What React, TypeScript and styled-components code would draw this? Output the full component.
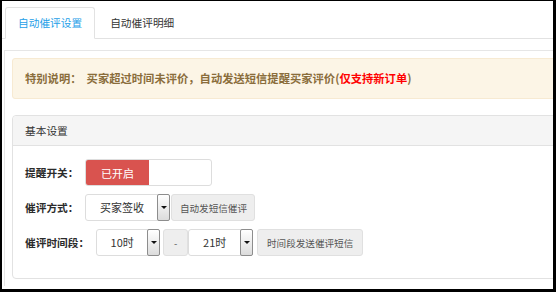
import styled, { createGlobalStyle } from "styled-components";

const GlobalStyle = createGlobalStyle`
  html, body {
    margin: 0;
    padding: 0;
    background: #fff;
  }
  body {
    font-family: "Noto Sans CJK SC", "Liberation Sans", sans-serif;
    font-size: 10.7px;
    color: #333;
  }
`;

const Frame = styled.div`
  width: 556px;
  height: 292px;
  box-sizing: border-box;
  border-style: solid;
  border-color: #000;
  border-width: 1px 3px 3px 2px;
  overflow: hidden;
  background: #fff;
`;
const Page = styled.div`
  width: 640px;
`;
const TabBar = styled.div`
  display: flex;
  padding: 6px 0 0 3px;
  border-bottom: 1px solid #e2e2e2;
`;
const Tab = styled.div<{ $active?: boolean }>`
  height: 30px;
  line-height: 30px;
  padding: 0 12px;
  margin-bottom: -1px;
  border: 1px solid transparent;
  border-radius: 3px 3px 0 0;
  color: #333;
  ${(p) =>
    p.$active &&
    `
    border-color: #e2e2e2;
    border-bottom-color: #fff;
    background: #fff;
    color: #26a0e8;
  `}
  & + & {
    padding-left: 14px;
  }
`;
const Content = styled.div`
  margin: 11px 0 0 2px;
  border-top: 1px solid #e6e6e6;
  border-left: 1px solid #e6e6e6;
  padding: 7px;
`;
const Notice = styled.div`
  height: 39px;
  line-height: 39px;
  padding-left: 12px;
  border: 1px solid #f7ead2;
  border-radius: 3px;
  background: #fcf5e6;
  color: #8a6d3b;
  font-size: 11.3px;
  font-weight: bold;
  white-space: pre;
`;
const Red = styled.span`
  color: #f00;
`;
const Panel = styled.div`
  margin-top: 16px;
  border: 1px solid #e2e2e2;
  border-radius: 4px;
`;
const PanelHeader = styled.div`
  height: 29px;
  line-height: 29px;
  padding-left: 12px;
  background: #f5f5f5;
  border-bottom: 1px solid #e2e2e2;
  border-radius: 4px 4px 0 0;
`;
const PanelBody = styled.div`
  display: flex;
  flex-direction: column;
  gap: 8px;
  padding: 13px 12px 22px;
`;
const Row = styled.div`
  display: flex;
  align-items: center;
  height: 27px;
`;
const Label = styled.span`
  font-weight: bold;
  margin-right: 7px;
  color: #2b2b2b;
`;
const Switch = styled.div`
  display: flex;
  width: 127px;
  height: 27px;
  box-sizing: border-box;
  border: 1px solid #ddd;
  border-radius: 3px;
  overflow: hidden;
  background: #fff;
`;
const SwitchOn = styled.span`
  width: 64px;
  margin: -1px 0 -1px -1px;
  background: #d9534f;
  color: #fff;
  font-size: 11px;
  display: flex;
  align-items: center;
  justify-content: center;
`;
const Select = styled.div<{ $w: number }>`
  display: flex;
  width: ${(p) => p.$w}px;
  height: 27px;
  box-sizing: border-box;
  border: 1px solid #ddd;
  border-radius: 3px;
  background: #fff;
`;
const SelectText = styled.span`
  flex: 1;
  line-height: 25px;
  text-align: center;
  font-size: 11px;
  color: #333;
`;
const Caret = styled.span`
  width: 13px;
  box-sizing: border-box;
  margin: -1px -1px -1px 0;
  border: 1px solid #8d8d8d;
  border-radius: 2px;
  background: linear-gradient(#fff, #dcdcdc);
  display: flex;
  align-items: center;
  justify-content: center;
  &::after {
    content: "";
    border-left: 3px solid transparent;
    border-right: 3px solid transparent;
    border-top: 3px solid #111;
  }
`;
const AddOn = styled.span<{ $w: number; $ml: number }>`
  width: ${(p) => p.$w}px;
  margin-left: ${(p) => p.$ml}px;
  height: 27px;
  box-sizing: border-box;
  border: 1px solid #e0e0e0;
  border-radius: 3px;
  background: #eee;
  color: #555;
  font-size: 9.6px;
  display: flex;
  align-items: center;
  justify-content: center;
`;

function Dropdown({ w, text }: { w: number; text: string }) {
  return (
    <Select $w={w}>
      <SelectText>{text}</SelectText>
      <Caret />
    </Select>
  );
}

export default function App() {
  return (
    <>
      <GlobalStyle />
      <Frame>
        <Page>
          <TabBar>
            <Tab $active>自动催评设置</Tab>
            <Tab>自动催评明细</Tab>
          </TabBar>
          <Content>
            <Notice>
              {"特别说明：  买家超过时间未评价，自动发送短信提醒买家评价("}
              <Red>仅支持新订单</Red>)
            </Notice>
            <Panel>
              <PanelHeader>基本设置</PanelHeader>
              <PanelBody>
                <Row>
                  <Label>提醒开关：</Label>
                  <Switch>
                    <SwitchOn>已开启</SwitchOn>
                  </Switch>
                </Row>
                <Row>
                  <Label>催评方式：</Label>
                  <Dropdown w={85} text="买家签收" />
                  <AddOn $w={84} $ml={1}>
                    自动发短信催评
                  </AddOn>
                </Row>
                <Row>
                  <Label>催评时间段：</Label>
                  <Dropdown w={64} text="10时" />
                  <AddOn $w={25} $ml={3}>
                    -
                  </AddOn>
                  <Dropdown w={65} text="21时" />
                  <AddOn $w={106} $ml={4}>
                    时间段发送催评短信
                  </AddOn>
                </Row>
              </PanelBody>
            </Panel>
          </Content>
        </Page>
      </Frame>
    </>
  );
}
